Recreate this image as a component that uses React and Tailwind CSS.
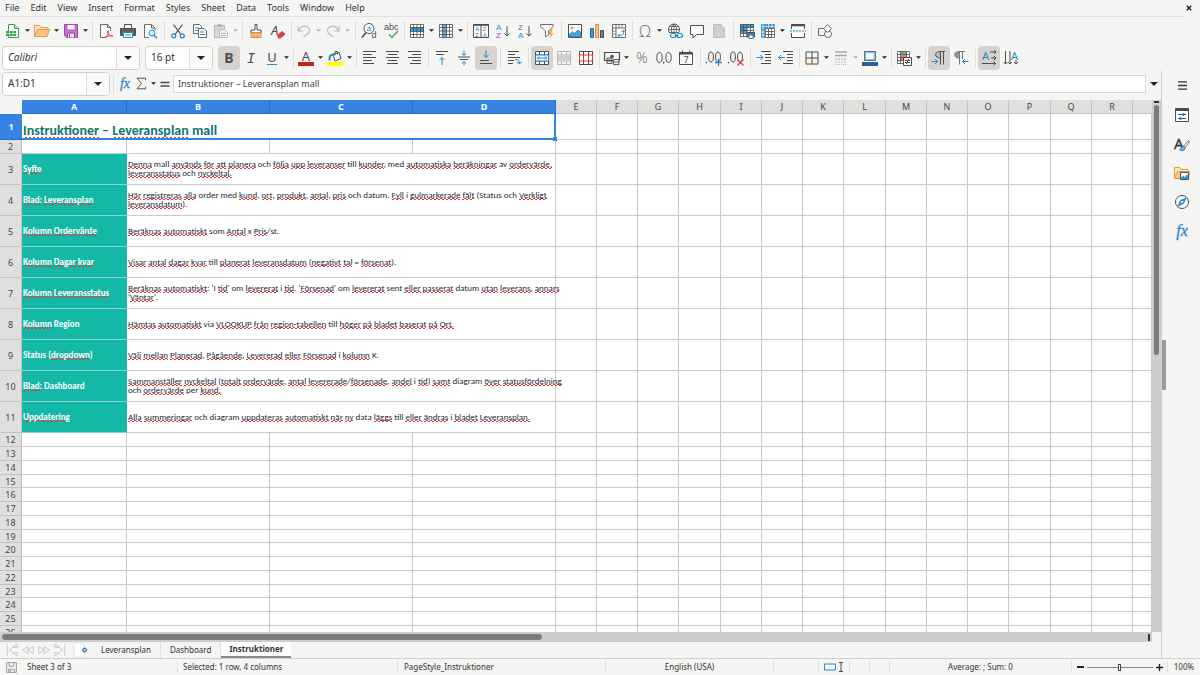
import { Fragment } from "react";

const dark = "#4d4d4d";
const blue = "#1e8bcd";
const red = "#d83b3b";
const purple = "#a33fb5";

const sans = "Liberation Sans, sans-serif";
const noto = "Noto Sans, sans-serif";

const lines = (rows, stroke = dark) =>
  rows.map(([x1, x2, y]) => <path key={y} d={`M${x1} ${y}H${x2}`} stroke={stroke} />);

// All drawings share a 16x16 view box.
const icons = {
  newDoc: (
    <>
      <path d="M3.5 1.5h6l4 4v9h-10z" fill="#fff" stroke="#3a9a54" />
      <path d="M9.5 1.5v4h4" fill="#bfe5c8" stroke="#3a9a54" />
      <path d="M1 8h10v5H1z" fill="#3aa556" />
      <path d="M1 10.5h10M4.5 8v5M8 8v5" stroke="#d8f3de" strokeWidth=".7" />
    </>
  ),
  folder: (
    <>
      <path d="M.5 13.5v-11h5l1.500 2h7v2" fill="#fbe3b9" stroke="#e39b45" />
      <path d="M.5 13.500l3-7h12l-2.500 7z" fill="#f9c67c" stroke="#e39b45" />
    </>
  ),
  save: (
    <>
      <path d="M1.500 1.500h13v13h-11l-2-2z" fill="#c77bd0" stroke="#9a3fa8" />
      <path d="M4 1.500h8v5.500H4z" fill="#fff" stroke="#9a3fa8" strokeWidth=".8" />
      <path d="M4.500 14.500V10h7v4.500" fill="#f2def5" stroke="#9a3fa8" />
      <path d="M6.500 11v3.500" stroke="#9a3fa8" />
    </>
  ),
  pdf: (
    <>
      <path d="M8 14.500H2.500v-13h7l3 3V8" fill="#fff" stroke="#6b6b6b" />
      <path d="M9.500 1.500v3h3" stroke="#6b6b6b" />
      <path d="M7 14.500c3-2 4-5 3.300-6.500-.8-1-1.500.6-.3 2.500 1.200 2 3.500 3 4.700 2.600 1-.8-1.700-1.300-7.700 1.400z" stroke="#dd3a4a" strokeWidth="1" />
    </>
  ),
  print: (
    <>
      <path d="M4.500 5.500v-4h7v4" fill="#fff" stroke={dark} />
      <path d="M.500 5.500h15v7H.500z" fill="#5d6266" stroke="#4a4e51" />
      <path d="M3.500 9.500h9v5h-9z" fill="#fff" stroke={blue} />
      <path d="M5 12h6" stroke={blue} />
    </>
  ),
  preview: (
    <>
      <path d="M7 14.500H2.500v-13h7l3.500 3.500V7" fill="#fff" stroke="#6b6b6b" />
      <path d="M9.500 1.500V5H13" stroke="#6b6b6b" />
      <circle cx="10" cy="10" r="3" fill="#d8ecf8" stroke={blue} />
      <path d="M12 12.200l3 3" stroke={blue} strokeWidth="1.400" />
    </>
  ),
  cut: (
    <>
      <path d="M3.500 1.500l7.500 10M12.500 1.500l-7.500 10" stroke={dark} strokeWidth="1.200" />
      <circle cx="3.700" cy="12.800" r="2" stroke={blue} strokeWidth="1.200" />
      <circle cx="12.300" cy="12.800" r="2" stroke={blue} strokeWidth="1.200" />
    </>
  ),
  copy: (
    <>
      <path d="M1.500 1.500h6l2 2v7h-8z" fill="#fff" stroke="#6b6b6b" />
      <path d="M3 5h4M3 7.500h4" stroke={blue} />
      <path d="M6.500 5.500h5.500l2.500 2.500v6.500h-8z" fill="#fff" stroke="#6b6b6b" />
      <path d="M8 9h4M8 11.500h5" stroke={blue} />
    </>
  ),
  paste: (
    <>
      <path d="M1.500 2.500h10v12h-10z" fill="#d9d8d7" stroke="#b9b8b6" />
      <path d="M4.500 1h4v3h-4z" fill="#b9b8b6" />
      <path d="M6.500 6.500h5l3 3v5h-8z" fill="#f2f1f0" stroke="#b9b8b6" />
      <path d="M8 10.500h5M8 12.500h5" stroke="#b9b8b6" />
    </>
  ),
  brush: (
    <>
      <path d="M7 1.500h2v5.500h4v3H3V7h4z" fill="#fff" stroke={dark} />
      <path d="M3 10h10v4.500H3z" fill="#f9c67c" stroke="#e08a35" />
      <path d="M6 11.500v3M9.500 11.500v3" stroke="#e08a35" />
    </>
  ),
  clear: (
    <>
      <text x="1" y="12" fontSize="13" fill={dark} fontFamily={noto} fontStyle="italic">A</text>
      <path d="M7.500 12.500l4.500-4 3 2.500-4.500 4h-2z" fill="#e0414b" stroke="#c4303a" strokeWidth=".8" />
    </>
  ),
  undo: <path d="M2 3v5h5M2.500 7.500c2-4.500 6-5.300 9-3.500 3 2 2.500 5 0 7l-4 3" stroke="#bdbcba" strokeWidth="1.200" />,
  redo: <path d="M14 3v5H9M13.500 7.500c-2-4.500-6-5.300-9-3.500-3 2-2.500 5 0 7l4 3" stroke="#bdbcba" strokeWidth="1.200" />,
  find: (
    <>
      <path d="M5 9.500L1 14.500" stroke={dark} strokeWidth="1.600" />
      <circle cx="8" cy="5.500" r="5" stroke={dark} fill="#fff" />
      <text x="5.500" y="8" fontSize="8" fill={blue} fontFamily={sans}>a</text>
      <text x="10.500" y="15" fontSize="9" fill={dark} fontFamily={sans}>d</text>
    </>
  ),
  spelling: (
    <>
      <text x="1" y="7" fontSize="9" fill={dark} fontFamily={sans}>abc</text>
      <path d="M6 11.500l3 3 6-6.500" stroke="#35b06c" strokeWidth="1.500" />
    </>
  ),
  rows: (
    <>
      <path d="M1 1h14v14H1z" fill="#fff" />
      <path d="M1 4h14v4.500H1z" fill="#2f97dc" />
      <path d="M1.500 1.500h13v13h-13zM1.500 4.500h13M1.500 8.500h13M1.500 11.500h13M4.500 1.500v13M8 1.500v13M11.500 1.500v13" stroke={dark} strokeWidth=".8" />
    </>
  ),
  cols: (
    <>
      <path d="M1 1h14v14H1z" fill="#fff" />
      <path d="M4.500 1h4v14h-4z" fill="#5ab0e6" />
      <path d="M1.500 1.500h13v13h-13zM1.500 4.500h13M1.500 8h13M1.500 11.500h13M4.500 1.500v13M8.500 1.500v13M11.500 1.500v13" stroke={dark} strokeWidth=".8" />
    </>
  ),
  sort: (
    <>
      <path d="M.5 1.500h15v13H.5zM8 1.500v13" fill="#fff" stroke={dark} />
      <path d="M.5 2h15" stroke={dark} strokeWidth="1.600" />
      <g fontSize="6" fontFamily={sans}>
        <text x="2.300" y="8" fill={blue}>A</text>
        <text x="2.300" y="14" fill={purple}>Z</text>
        <text x="9.800" y="8" fill={purple}>Z</text>
        <text x="9.800" y="14" fill={blue}>A</text>
      </g>
    </>
  ),
  sortAsc: (
    <>
      <text x="1" y="6.500" fontSize="8" fill={blue} fontFamily={sans}>A</text>
      <text x="1" y="15" fontSize="8" fill={purple} fontFamily={sans}>Z</text>
      <path d="M12 3v10M9.500 10.500L12 13l2.500-2.500" stroke={dark} />
    </>
  ),
  sortDesc: (
    <>
      <text x="1" y="6.500" fontSize="8" fill={purple} fontFamily={sans}>Z</text>
      <text x="1" y="15" fontSize="8" fill={blue} fontFamily={sans}>A</text>
      <path d="M12 3v10M9.500 10.500L12 13l2.500-2.500" stroke={dark} />
    </>
  ),
  filter: (
    <>
      <path d="M1.500 1.500h12.500v2L9.500 8v4l-3 2V8l-5-4.500z" fill="#fff" stroke="#6b6b6b" />
      <path d="M12 6l-3 5h2.500l-1 4.500 4-5.500H12l2-4z" fill="#f6a03a" />
    </>
  ),
  image: (
    <>
      <path d="M1.500 1.500h13v13h-13z" fill="#fff" stroke={dark} />
      <circle cx="5" cy="5" r="1.600" fill="#f3a64c" />
      <path d="M2 14v-2l3.500-3 2 1.500L11 7l3 3v4z" fill="#4aa3de" stroke="#1d70ae" strokeWidth=".8" />
    </>
  ),
  chart: (
    <>
      <path d="M1.500 5.500h3v9h-3z" fill="#3d97d8" stroke="#1d70ae" />
      <path d="M6.500 1.500h3v13h-3z" fill="#f9c67c" stroke="#e08a35" />
      <path d="M11.500 7.500h3v7h-3z" fill="#7a7a7a" stroke={dark} />
    </>
  ),
  pivot: (
    <>
      <path d="M1.500 1.500h13v13h-13zM1.500 5h13M5 1.500v13" fill="#fff" stroke="#6b6b6b" />
      <path d="M8 1.500V5M11 1.500V5M1.500 8H5M1.500 11H5" stroke="#6b6b6b" strokeWidth=".8" />
      <path d="M7.500 12.500h2c2 0 3-1 3-3v-2M9 10.500l-2 2 2 2M10.500 9l2-2 2 2" stroke={blue} />
    </>
  ),
  omega: <text x="8" y="13.500" fontSize="16" textAnchor="middle" fill="#6b6b6b" fontFamily="Open Sans, sans-serif" fontWeight="300">Ω</text>,
  globe: (
    <>
      <circle cx="7" cy="6.500" r="5.500" fill="#fff" stroke={dark} />
      <path d="M1.500 6.500h11M2.500 3.500h9M2.500 9.500h9M7 1v11M7 1C3.500 4 3.500 9 7 12M7 1c3.500 3 3.500 8 0 11" stroke={dark} strokeWidth=".8" />
      <path d="M3 10h13v5H3z" fill="#f5f5f4" />
      <rect x="3.500" y="10.500" width="5.500" height="4" rx="2" stroke={blue} strokeWidth="1.200" />
      <rect x="10" y="10.500" width="5.500" height="4" rx="2" stroke={blue} strokeWidth="1.200" />
      <path d="M7.500 12.500h4" stroke={blue} />
    </>
  ),
  comment: <path d="M1.500 2.500h13v9H7.500l-3.500 3.500v-3.500H1.500z" fill="#fff" stroke={dark} />,
  headerFooter: (
    <>
      <path d="M2.500 1.500h7.500l3.500 3.500v9.500h-11z" fill="#d0cfcd" stroke="#bfbebc" />
      <path d="M10 1.500V5h3.500" fill="#e8e7e6" stroke="#bfbebc" />
    </>
  ),
  printRange: (
    <>
      <path d="M1 1h14v13H1z" fill="#fff" />
      <path d="M1 1h14v3.500H1zM1 4h7v6H1z" fill="#3d97d8" />
      <path d="M1.500 1.500h13v12h-13zM1.500 4.500h13M1.500 7.500h13M1.500 10.500h13M4.500 1.500v12M8 1.500v12M11.500 1.500v12" stroke={dark} strokeWidth=".8" />
      <path d="M8 9.500h7.500V14H8z" fill="#6d7275" stroke={dark} />
      <path d="M10 12h4v3.500h-4z" fill="#fff" stroke={blue} />
    </>
  ),
  freeze: (
    <>
      <path d="M2 2h13v13H2z" fill="#fff" />
      <path d="M1 1h14v4H1zM1 5h4v10H1z" fill="#3d97d8" />
      <path d="M5.500 5.500h9v9h-9zM5.500 8.500h9M5.500 11.500h9M8.500 5.500v9M11.500 5.500v9" stroke={dark} strokeWidth=".8" />
      <path d="M1 3.500h14M3 1v14M8.500 1v4M12 1v4M1 9h4M1 12h4" stroke="#cfe8f7" strokeWidth=".8" />
    </>
  ),
  split: (
    <>
      <path d="M1.500 6V1.500h13V6M1.500 10v4.500h13V10" fill="#fff" stroke={dark} />
      <path d="M1 2.500h14" stroke={dark} strokeWidth="1.600" />
      <path d="M0 8h16" stroke={blue} strokeDasharray="2 1" />
    </>
  ),
  shapes: (
    <>
      <path d="M1.500 5.500h7v7h-7z" stroke="#6b6b6b" />
      <circle cx="11" cy="11" r="3.500" fill="#f5f5f4" stroke="#6b6b6b" />
      <path d="M10.500 1.500l4 4-4 4-4-4z" fill="#f5f5f4" stroke="#6b6b6b" />
    </>
  ),
  bold: <text x="8" y="13" fontSize="14" fontWeight="700" textAnchor="middle" fill={dark} fontFamily={noto}>B</text>,
  italic: <text x="8" y="13" fontSize="14" fontStyle="italic" textAnchor="middle" fill={dark} fontFamily="Liberation Mono, monospace">I</text>,
  underline: (
    <>
      <text x="8" y="12" fontSize="13" textAnchor="middle" fill={dark} fontFamily={noto}>U</text>
      <path d="M3 14.500h10" stroke={blue} />
    </>
  ),
  fontColor: (
    <>
      <text x="8" y="10.500" fontSize="13" textAnchor="middle" fill={dark} fontFamily={noto}>A</text>
      <path d="M0 12h16v4H0z" fill="#c9211e" />
    </>
  ),
  fillColor: (
    <>
      <path d="M6 4.500l6-2 2 6-6 2.500z" fill="#fff" stroke={dark} />
      <path d="M8 5.500V1.500h2.500v3" stroke={dark} />
      <path d="M7 4.500c-3 0-5 1-4.500 6" stroke={blue} strokeWidth="2" />
      <path d="M0 12h16v4H0z" fill="#ffff00" />
    </>
  ),
  alignLeft: lines([[1, 14, 1.5], [1, 10, 4.5], [1, 14, 7.5], [1, 10, 10.5], [1, 12, 13.5]]),
  alignCenter: lines([[2, 15, 1.5], [4, 13, 4.5], [2, 15, 7.5], [4, 13, 10.5], [3, 14, 13.5]]),
  alignRight: lines([[2, 15, 1.5], [6, 15, 4.5], [2, 15, 7.5], [6, 15, 10.5], [4, 15, 13.5]]),
  alignTop: (
    <>
      {lines([[2, 14, 1.5], [2, 10, 4.5]])}
      <path d="M8 15V7.500M5.500 10L8 7.500l2.500 2.500" stroke={blue} />
    </>
  ),
  alignMiddle: (
    <>
      {lines([[2, 14, 7], [4, 12, 9.5]])}
      <path d="M8 .5v5M6 3.500l2 2 2-2M8 15.500v-4M6 13.500l2-2 2 2" stroke={blue} />
    </>
  ),
  alignBottom: (
    <>
      {lines([[2, 11, 10.5], [2, 14, 13.5]])}
      <path d="M8 .5v7M5.500 5L8 7.500 10.500 5" stroke={blue} />
    </>
  ),
  wrap: (
    <>
      {lines([[2, 13, 1.5], [2, 9, 4.5], [2, 14, 7.5], [2, 8, 10.5], [2, 7, 13.5]])}
      <path d="M9 9.500c3-.5 4.500 1 4.500 4M11 12l2.500 2L15.500 11.500" stroke={blue} />
    </>
  ),
  merge: (
    <>
      <path d="M1.500 1.500h13v13h-13zM1.500 5h13M1.500 11h13M5.500 1.500V5M10.500 1.500V5M5.500 11v3.500M10.500 11v3.500" fill="#fff" stroke={dark} />
      <path d="M1.500 5h13v6h-13z" fill="#fff" stroke={blue} />
      <path d="M3 8h10M5 6.500L3.500 8 5 9.500M11 6.500L12.500 8 11 9.500" stroke={blue} />
    </>
  ),
  mergeCells: (
    <>
      <path d="M1.500 1.500h13v13h-13zM1.500 5h13M1.500 11h13M5.500 1.500V5M10.500 1.500V5M5.500 11v3.500M10.500 11v3.500" stroke="#b9b8b6" />
      <path d="M2 5.500h12v5H2z" fill="#d0cfcd" />
    </>
  ),
  unmerge: (
    <>
      <path d="M1.500 1.500h13v13h-13zM5.500 1.500V5M10.500 1.500V5M5.500 11v3.500M10.500 11v3.500" fill="#fff" stroke={dark} />
      <path d="M1.500 5h13v6h-13zM5.500 5v6M10.500 5v6" stroke={red} />
    </>
  ),
  currency: (
    <>
      <path d="M.5 2.500h15v8H.5z" stroke={dark} strokeWidth="1.200" />
      <circle cx="8" cy="6.500" r="1.800" fill={dark} />
      <path d="M3 8h5v2H3zM3 11h5v2.500H3zM9.500 9.500H15v5H9.500z" fill="#f5f5f4" stroke={dark} strokeWidth=".9" />
      <path d="M9.500 12H15" stroke={dark} strokeWidth=".9" />
    </>
  ),
  percent: <text x="8" y="13" fontSize="14" textAnchor="middle" fill="#5c5c5c" fontFamily="Open Sans, sans-serif" fontWeight="300">%</text>,
  number: (
    <>
      <ellipse cx="3.500" cy="7.500" rx="2.700" ry="5" stroke={dark} />
      <ellipse cx="12.500" cy="7.500" rx="2.700" ry="5" stroke={dark} />
      <path d="M7.200 13.500l.9-1.800" stroke={dark} strokeWidth="1.300" />
    </>
  ),
  date: (
    <>
      <path d="M1.500 2.500h13v12h-13z" fill="#fff" stroke={dark} />
      <path d="M1.500 3.500h13" stroke={dark} strokeWidth="2" />
      <path d="M4.500.5v3M11.500.5v3" stroke={dark} />
      <text x="8" y="13" fontSize="9" textAnchor="middle" fill={dark} fontFamily={noto}>7</text>
    </>
  ),
  addDecimal: (
    <>
      <path d="M.5 11.800v1.500" stroke={dark} strokeWidth="1.300" />
      <ellipse cx="5" cy="7" rx="2.400" ry="5" stroke={dark} />
      <ellipse cx="12" cy="7" rx="2.400" ry="5" stroke={dark} />
      <path d="M9 12.500h7M12.500 9v7" stroke={blue} strokeWidth="1.300" />
    </>
  ),
  removeDecimal: (
    <>
      <path d="M.5 11.800v1.500" stroke={dark} strokeWidth="1.300" />
      <ellipse cx="5" cy="7" rx="2.400" ry="5" stroke={dark} />
      <ellipse cx="12" cy="7" rx="2.400" ry="5" stroke={dark} />
      <path d="M9.500 9.500l6 6M15.500 9.500l-6 6" stroke={red} strokeWidth="1.200" />
    </>
  ),
  indent: (
    <>
      {lines([[5, 15, 1.5], [9, 15, 4.5], [9, 15, 7.5], [9, 15, 10.5], [5, 15, 13.5]])}
      <path d="M.5 7.500H7M4.500 5L7 7.500 4.500 10" stroke={blue} />
    </>
  ),
  outdent: (
    <>
      {lines([[5, 15, 1.5], [9, 15, 4.5], [9, 15, 7.5], [9, 15, 10.5], [5, 15, 13.5]])}
      <path d="M.5 7.500H7M3 5L.500 7.500 3 10" stroke={blue} />
    </>
  ),
  borders: (
    <>
      <path d="M2 2h12v12H2zM8 2v12M2 8h12" stroke={dark} />
      <path d="M2 14h12" stroke="#f08a2c" />
    </>
  ),
  borderStyle: (
    <>
      <path d="M2 2h12M2 5.500h12" stroke="#a9a8a6" strokeWidth="1.500" />
      <path d="M2 9h12" stroke="#a9a8a6" strokeDasharray="2 1" />
      <path d="M2 12h12M2 14.500h12" stroke="#b9b8b6" strokeDasharray="1 1" />
    </>
  ),
  borderColor: (
    <>
      <path d="M2.500 1.500h11v9h-11z" stroke={dark} fill="#fff" />
      <path d="M3.500 2.500h9v7h-9z" stroke="#8cc4ea" strokeWidth="1.600" />
      <path d="M0 12h16v4H0z" fill="#2a6099" />
    </>
  ),
  conditional: (
    <>
      <path d="M1 1h13v13H1z" fill="#fff" />
      <path d="M4.500 1.500h6V4h-6z" fill="#5dbb63" />
      <path d="M4.500 4.500h6v6h-6z" fill="#f27a7a" />
      <path d="M1.500 1.500h12v12h-12zM1.500 4.500h12M1.500 7.500h12M1.500 10.500h12M4.500 1.500v12M10.500 1.500v12" stroke={dark} strokeWidth=".8" />
      <path d="M7.500 7.500h8v8h-8z" fill="#fff" stroke={dark} />
      <path d="M9 10.500h5M9 12.500h5M12.800 9l-2.600 5" stroke={dark} />
    </>
  ),
  leftToRight: (
    <>
      <path d="M8 1.500h6M9.500 1.500v13M12.500 1.500v13" stroke={dark} />
      <path d="M9.500 1.500C3 1.500 3 8 9.500 8z" fill="#bbb" stroke={dark} />
      <path d="M.5 11.500h6M4 9l2.500 2.500L4 14" stroke={blue} />
    </>
  ),
  rightToLeft: (
    <>
      <path d="M6 1.500h6M6.500 1.500v13M9.500 1.500V9" stroke="#777" />
      <path d="M6.500 1.500C0 1.500 0 8 6.500 8z" fill="#999" stroke="#777" />
      <path d="M15.500 11.500H9.500M12 9l-2.500 2.500L12 14" stroke={blue} />
    </>
  ),
  textHorizontal: (
    <>
      <text x="1" y="9.500" fontSize="11" fill={blue} fontFamily={noto}>A</text>
      <path d="M9 2h6M13 .5L15 2l-2 1.500M10 8h5M13 6l2 2-2 2M1 13.500h13.500M12.500 11.500l2 2-2 2" stroke={dark} />
    </>
  ),
  textVertical: (
    <>
      <text x="8" y="9.500" fontSize="11" fill={blue} fontFamily={noto}>A</text>
      <path d="M2.500 1v13M.5 12l2 2 2-2M7 1v13M5 12l2 2 2-2M13 10v4M11 12l2 2 2-2" stroke={dark} />
    </>
  ),
  fx: (
    <text x="8" y="12.500" fontSize="16" fontStyle="italic" textAnchor="middle" fill="#2a87c8" stroke="#2a87c8" strokeWidth=".3" fontFamily="Liberation Serif, serif">
      fx
    </text>
  ),
  sigma: <path d="M13 4V1.500H2.500L8 8l-5.500 6.500H13V12" stroke={dark} strokeWidth="1.200" />,
  equals: <path d="M2 6h12M2 10.500h12" stroke={dark} strokeWidth="2" />,
  hamburger: <path d="M2.500 3.500h11M2.500 8h11M2.500 12.500h11" stroke="#333" strokeWidth="1.600" />,
  properties: (
    <>
      <path d="M1.500 1.500h13v13h-13z" fill="#fff" stroke={dark} />
      <path d="M1.500 3h13" stroke={dark} strokeWidth="2" />
      <path d="M4 7.500h8M4 11.500h8" stroke={dark} />
      <path d="M9.500 6v3M6.500 10v3" stroke={blue} strokeWidth="1.800" />
    </>
  ),
  styles: (
    <>
      <text x="0" y="12.500" fontSize="15" fill="#333" stroke="#333" strokeWidth=".3" fontFamily={noto}>A</text>
      <path d="M14.500 4.500L9.500 10l1.500 1.500 4.500-5.500z" fill="#fff" stroke={dark} strokeWidth=".8" />
      <path d="M9.500 10c-2 0-2 3-4 4 3 1.500 6 .5 5.500-2.500z" fill="#5ab0e6" stroke={blue} />
    </>
  ),
  gallery: (
    <>
      <path d="M.5 13.500v-11h5l1.500 2h7v3" fill="#fbe3b9" stroke="#e39b45" />
      <path d="M.5 13.500l3-7h12l-1 7z" fill="#f9c67c" stroke="#e39b45" />
      <path d="M6.500 7.500h8v7h-8z" fill="#fff" stroke={dark} />
      <path d="M7 14v-1.500l2.500-2L11 12l2-2.500 1 1V14z" fill="#3d97d8" />
    </>
  ),
  navigator: (
    <>
      <circle cx="8" cy="8" r="6.500" fill="#fff" stroke={dark} />
      <path d="M12 4l-2.500 5.500L4 12l2.500-5.500z" fill="#3d97d8" stroke={blue} />
      <circle cx="8" cy="8" r="1" fill="#fff" />
    </>
  ),
  diskSmall: (
    <>
      <path d="M2 2h12v12H2z" stroke="#8a8a8a" />
      <path d="M5 2v4.500h6V2M4.500 14v-4h7v4M6.500 10v4" stroke="#8a8a8a" />
    </>
  ),
  addSheet: (
    <>
      <path d="M0 0h9l3 3v13H0z" fill="#fff" stroke="#d5d4d2" strokeWidth=".6" />
      <circle cx="12" cy="8" r="2" stroke="#2a6cb8" strokeWidth="1.200" />
      <path d="M12 5v2M12 9v2M9 8h2M13 8h2" stroke="#2a6cb8" />
    </>
  ),
  first: <path d="M2.500 1v14M14 1L5 8l9 7v-4H9M14 1v4H9" stroke="#c6c5c3" />,
  prev: <path d="M8 4L2 8l6 4zM14 4L8 8l6 4z" stroke="#c6c5c3" />,
  next: <path d="M2 4l6 4-6 4zM8 4l6 4-6 4z" stroke="#c6c5c3" />,
  last: <path d="M13.500 1v14M2 1l9 7-9 7v-4h5M2 1v4h5" stroke="#c6c5c3" />,
};

function Icon({ name, className = "h-4 w-4" }) {
  return (
    <svg viewBox="0 0 16 16" fill="none" className={`${className} shrink-0 overflow-visible`} aria-hidden="true">
      {icons[name]}
    </svg>
  );
}

function Caret({ muted, large }) {
  return (
    <svg viewBox="0 0 8 4" className={large ? "h-1 w-2" : "h-[3px] w-[5px]"} aria-hidden="true">
      <path d="M0 0h8L4 4z" fill={muted ? "#b5b4b2" : "#222"} />
    </svg>
  );
}

// "|" is a separator between plain groups, "'" one next to a split button.
const standardBar = [
  "newDoc+", "folder+", "save+", "'", "pdf", "print", "preview", "|", "cut", "copy", "paste-", "'",
  "brush", "clear", "'", "undo-", "redo-", "|", "find", "spelling", "'", "rows+", "cols+", "'",
  "sort", "sortAsc", "sortDesc", "filter", "|", "image", "chart", "pivot", "'", "omega+",
  "globe", "comment", "headerFooter", "|", "printRange", "freeze+", "split", "'", "shapes",
];

const formattingBar = [
  "bold*", "italic", "underline+", "'", "fontColor+", "fillColor+", "'",
  "alignLeft", "alignCenter", "alignRight", "|", "alignTop", "alignMiddle", "alignBottom*", "|",
  "wrap", "|", "merge*", "mergeCells", "unmerge", "'", "currency+", "percent", "number", "date", "|",
  "addDecimal", "removeDecimal", "|", "indent", "outdent", "'", "borders+", "borderStyle-", "borderColor+", "'",
  "conditional+", "'", "leftToRight*", "rightToLeft", "|", "textHorizontal*", "textVertical",
];

function ToolItem({ item }) {
  if (item === "|" || item === "'") {
    return (
      <div className={`flex shrink-0 justify-center ${item === "|" ? "w-[6px]" : "w-[5px]"}`}>
        <div className="h-5 w-px bg-[#e0dfdd]" />
      </div>
    );
  }

  const name = item.replace(/[+*-]$/, "");
  const flag = item.slice(name.length);

  if (flag === "+" || flag === "-") {
    return (
      <div className="flex shrink-0 items-center">
        <button aria-label={name} className="flex h-6 w-5 items-center justify-center">
          <Icon name={name} />
        </button>
        <button aria-label={`${name} options`} className="flex h-6 w-[9px] items-center justify-center">
          <Caret muted={flag === "-"} />
        </button>
      </div>
    );
  }

  return (
    <button
      aria-label={name}
      className={`flex h-6 w-[22px] shrink-0 items-center justify-center rounded-sm ${flag === "*" ? "bg-[#d5d2cf]" : ""}`}
    >
      <Icon name={name} />
    </button>
  );
}

function Combo({ label, value, className, inputClass = "" }) {
  return (
    <div className={`flex h-6 shrink-0 overflow-hidden rounded border border-[#d2cfcc] bg-white ${className}`}>
      <input aria-label={label} defaultValue={value} className={`min-w-0 flex-1 px-[5px] text-[10px] outline-none ${inputClass}`} />
      <button aria-label={`${label} list`} className="flex w-[23px] items-center justify-center border-l border-[#e0dfdd] bg-[#fafaf9]">
        <Caret large />
      </button>
    </div>
  );
}

const menus = ["File", "Edit", "View", "Insert", "Format", "Styles", "Sheet", "Data", "Tools", "Window", "Help"];

// Words between underscores are flagged by the spell checker.
const instructions = [
  ["_Syfte_", "_Denna_ mall _används_ _för_ _att_ _planera_ och _följa_ _upp_ _leveranser_ till _kunder_, med _automatiska_ _beräkningar_ av _ordervärde,_", "_leveransstatus_ och _nyckeltal._"],
  ["_Blad_: _Leveransplan_", "_Här_ _registreras_ _alla_ order med _kund_, _ort_, _produkt_, _antal_, _pris_ och datum. _Fyll_ i _gulmarkerade_ _fält_ (Status och _Verkligt_", "_leveransdatum_)."],
  ["_Kolumn_ _Ordervärde_", "_Beräknas_ _automatiskt_ som _Antal_ x _Pris_/st."],
  ["_Kolumn_ _Dagar_ _kvar_", "_Visar_ _antal_ _dagar_ _kvar_ till _planerat_ _leveransdatum_ (_negativt_ _tal_ = _försenat_)."],
  ["_Kolumn_ _Leveransstatus_", "_Beräknas_ _automatiskt_: 'I _tid_' om _levererat_ i _tid_. '_Försenad_' om _levererat_ sent _eller_ _passerat_ datum _utan_ _leverans_, _annars_", "'_Väntar_'."],
  ["_Kolumn_ Region", "_Hämtas_ _automatiskt_ via _VLOOKUP_ _från_ _region-tabellen_ till _höger_ _på_ _bladet_ _baserat_ _på_ _Ort._"],
  ["Status (_dropdown_)", "_Välj_ _mellan_ _Planerad_, _Pågående_, _Levererad_ _eller_ _Försenad_ i _kolumn_ K."],
  ["_Blad_: Dashboard", "_Sammanställer_ _nyckeltal_ (_totalt_ _ordervärde_, _antal_ _levererade_/_försenade_, _andel_ i _tid_) _samt_ diagram _över_ _statusfördelning_", "och _ordervärde_ per _kund._"],
  ["_Uppdatering_", "_Alla_ _summeringar_ och diagram _uppdateras_ _automatiskt_ _när_ _ny_ data _läggs_ till _eller_ _ändras_ i _bladet_ _Leveransplan._"],
];

// Small two-row red zigzag under each flagged word.
const squiggle =
  "bg-[image:linear-gradient(90deg,#e03c3c_50%,transparent_50%),linear-gradient(90deg,#e03c3c_50%,transparent_50%)] bg-[length:4px_1px] bg-[position:0_100%,2px_calc(100%-1px)] bg-repeat-x";

function Checked({ text }) {
  return text.split("_").map((part, i) =>
    i % 2 ? (
      <span key={i} className={squiggle}>
        {part}
      </span>
    ) : (
      <Fragment key={i}>{part}</Fragment>
    )
  );
}

const letters = "ABCDEFGHIJKLMNOPQR".split("");
const narrow = letters.slice(4);

const cell = "border-r border-b border-[#c9c9c9] p-0";
const rowHead = "border-r border-b border-[#c4c3c1] bg-[#e0dfdd] p-0 font-normal text-[#444]";
const bodyText = "pb-[2px] pl-px align-middle font-[Carlito,Lato,sans-serif] text-[9px] leading-[9px] whitespace-nowrap";

function BlankCells({ count }) {
  return Array.from({ length: count }, (_, i) => <td key={i} className={cell} />);
}

function Sheet() {
  return (
    <table className="w-full table-fixed border-separate border-spacing-0 text-[9px] leading-none">
      <colgroup>
        <col className="w-[22px]" />
        <col className="w-[105px]" />
        <col className="w-[143px]" />
        <col className="w-[143px]" />
        <col className="w-[143px]" />
        {narrow.map((l, i) => (
          <col key={l} className={i % 4 === 3 ? "w-[42px]" : "w-[41px]"} />
        ))}
        <col />
      </colgroup>
      <thead>
        <tr className="h-[14px]">
          <th className="bg-[#f5f5f4] p-0" />
          {letters.map((l, i) => (
            <th
              key={l}
              className={`border-r border-b p-0 ${i < 4 ? "border-[#2a6fc4] bg-[#3584e4] font-bold text-white" : "border-[#c4c3c1] bg-[#e0dfdd] font-normal text-[#444]"}`}
            >
              {l}
            </th>
          ))}
          <th className="border-b border-[#c4c3c1] bg-[#e0dfdd] p-0" />
        </tr>
      </thead>
      <tbody>
        <tr className="h-[26px]">
          <th className="border-b border-[#2a6fc4] bg-[#3584e4] p-0 font-bold text-white">1</th>
          <td colSpan={4} className="relative p-0 align-bottom">
            <div className="px-px pb-[2px] font-[Carlito,Lato,sans-serif] text-[14px] font-bold leading-none text-[#0f766e]">
              <Checked text="_Instruktioner_ – _Leveransplan_ mall" />
            </div>
            <div className="absolute inset-0 border-r-2 border-b-2 border-[#3584e4]" />
            <div className="absolute -right-px -bottom-px h-1 w-1 bg-[#3584e4]" />
          </td>
          <BlankCells count={15} />
        </tr>
        <tr className="h-[14px]">
          <th className={rowHead}>2</th>
          <BlankCells count={19} />
        </tr>
        {instructions.map(([title, ...body], i) => (
          <tr key={title} className="h-[31px]">
            <th className={rowHead}>{i + 3}</th>
            <td className={`${bodyText} border-b border-[#8fd0c8] bg-[#14b8a6] font-bold text-white`}>
              <Checked text={title} />
            </td>
            <td colSpan={3} className={`${bodyText} border-r border-b border-[#c9c9c9] text-[#1f2937]`}>
              {body.map((line) => (
                <div key={line}>
                  <Checked text={line} />
                </div>
              ))}
            </td>
            <BlankCells count={15} />
          </tr>
        ))}
        {Array.from({ length: 15 }, (_, i) => (
          <tr key={i} className={i % 4 === 3 ? "h-[13px]" : "h-[14px]"}>
            <th className={rowHead}>{i + 12}</th>
            <BlankCells count={19} />
          </tr>
        ))}
      </tbody>
    </table>
  );
}

function FormulaBar() {
  return (
    <div className="flex h-[29px] shrink-0 items-center pb-1">
      <Combo label="Name Box" value="A1:D1" className="ml-[2px] w-[108px]" />
      <div className="mx-[3px] h-5 w-px bg-[#e0dfdd]" />
      <button aria-label="Function Wizard" className="flex w-4 justify-center">
        <Icon name="fx" className="h-[14px] w-[14px]" />
      </button>
      <button aria-label="Select Function" className="flex w-4 justify-center">
        <Icon name="sigma" className="h-[13px] w-[13px]" />
      </button>
      <button aria-label="Function list" className="flex w-2 justify-center">
        <Caret />
      </button>
      <button aria-label="Formula" className="mx-[3px] flex w-[10px] justify-center">
        <Icon name="equals" className="h-3 w-3" />
      </button>
      <input
        aria-label="Input line"
        defaultValue="Instruktioner – Leveransplan mall"
        className="h-[18px] min-w-0 flex-1 border border-[#d8d7d5] bg-white px-1 text-[9px] text-[#444] outline-none"
      />
      <button aria-label="Expand formula bar" className="flex w-[15px] justify-center">
        <Caret large />
      </button>
    </div>
  );
}

const tabs = ["Leveransplan", "Dashboard", "Instruktioner"];

function SheetTabs() {
  return (
    <nav className="flex h-4 shrink-0 items-stretch text-[8px] text-[#333]">
      <div className="flex w-[70px] items-center pl-1">
        {["first", "prev", "next", "last"].map((n) => (
          <button key={n} aria-label={`${n} sheet`}>
            <Icon name={n} className="h-[14px] w-[16px]" />
          </button>
        ))}
      </div>
      <button aria-label="Add sheet" className="flex w-[22px] items-center justify-center">
        <Icon name="addSheet" className="h-[14px] w-[14px]" />
      </button>
      {tabs.map((t) => (
        <button
          key={t}
          className={t === "Instruktioner" ? "border-b-2 border-[#8a8988] bg-white px-2 font-bold" : "border-r border-[#e0dfdd] px-[9px]"}
        >
          {t}
        </button>
      ))}
    </nav>
  );
}

function StatusBar() {
  const part = "flex items-center border-r border-[#e0dfdd] h-3";
  return (
    <footer className="flex h-[17px] shrink-0 items-center border-t border-[#d0cfcd] text-[8px] text-[#333]">
      <div className="flex w-[22px] items-center justify-center">
        <Icon name="diskSmall" className="h-[13px] w-[13px]" />
      </div>
      <div className={`${part} w-[156px] pl-[5px]`}>Sheet 3 of 3</div>
      <div className={`${part} w-[220px] pl-[5px]`}>Selected: 1 row, 4 columns</div>
      <div className={`${part} flex-1 pl-[6px]`}>PageStyle_Instruktioner</div>
      <div className={`${part} w-[168px] justify-center`}>English (USA)</div>
      <div className={`${part} w-[45px]`} />
      <div className={`${part} w-[31px] justify-center`}>
        <svg viewBox="0 0 20 12" className="h-3 w-5" fill="none" aria-hidden="true">
          <path d="M.5 3h11v6H.5z" stroke={blue} />
          <path d="M15 1.500h4M15 10.500h4M17 1.500v9" stroke={dark} />
        </svg>
      </div>
      <div className={`${part} w-5`} />
      <div className={`${part} w-5`} />
      <div className={`${part} w-[182px] justify-center`}>Average: ; Sum: 0</div>
      <div className={`${part} w-24 justify-center gap-[3px]`}>
        <button aria-label="Zoom out" className="h-[2px] w-[7px] bg-[#222]" />
        <input
          type="range"
          aria-label="Zoom"
          defaultValue={50}
          className="h-2 w-[66px] appearance-none bg-transparent [&::-webkit-slider-runnable-track]:h-px [&::-webkit-slider-runnable-track]:bg-[#8a8988] [&::-webkit-slider-thumb]:-mt-[3px] [&::-webkit-slider-thumb]:h-[7px] [&::-webkit-slider-thumb]:w-[3px] [&::-webkit-slider-thumb]:appearance-none [&::-webkit-slider-thumb]:border [&::-webkit-slider-thumb]:border-[#444] [&::-webkit-slider-thumb]:bg-white"
        />
        <button aria-label="Zoom in" className="flex w-[7px] justify-center">
          <svg viewBox="0 0 8 8" className="h-[7px] w-[7px]" aria-hidden="true">
            <path d="M0 4h8M4 0v8" stroke="#222" strokeWidth="1.600" />
          </svg>
        </button>
      </div>
      <div className="w-8 text-center">100%</div>
    </footer>
  );
}

export default function App() {
  return (
    <div className="flex h-screen flex-col overflow-hidden bg-[#f5f5f4] font-[Noto_Sans,sans-serif] text-[#333]">
      <header className="shrink-0">
        <div className="mr-4 flex h-[17px] items-center gap-px border-b border-[#e2e1df] text-[9px]">
          {menus.map((m) => (
            <button key={m} className="px-[5px]">
              {m}
            </button>
          ))}
          <button aria-label="Close document" className="-mr-3 ml-auto p-1">
            <svg viewBox="0 0 8 8" className="h-[6px] w-[6px]" aria-hidden="true">
              <path d="M1 1l6 6M7 1L1 7" stroke="#222" strokeWidth="2" />
            </svg>
          </button>
        </div>
        <div className="flex h-[27px] items-center pl-[3px]">
          {standardBar.map((item, i) => (
            <ToolItem key={i} item={item} />
          ))}
        </div>
        <div className="flex h-[27px] items-center pl-[2px]">
          <Combo label="Font Name" value="Calibri" className="w-[138px]" inputClass="italic" />
          <Combo label="Font Size" value="16 pt" className="mx-[5px] w-[68px]" />
          {formattingBar.map((item, i) => (
            <ToolItem key={i} item={item} />
          ))}
        </div>
      </header>

      <div className="flex min-h-0 flex-1">
        <main className="flex min-w-0 flex-1 flex-col border-r border-[#d0cfcd]">
          <FormulaBar />
          <div className="flex min-h-0 flex-1">
            <div className="min-w-0 flex-1 overflow-hidden bg-white">
              <Sheet />
            </div>
            <div className="w-[9px] bg-[#cdcdcd] px-[2px] pt-[1px]">
              <div className="h-[2px] bg-[#333]" />
              <div className="mt-[2px] h-[47%] rounded-full bg-[#7b7b7b]" />
            </div>
          </div>
          <div className="mr-[9px] flex h-[10px] shrink-0 items-center justify-between bg-[#cdcdcd] px-[2px]">
            <div className="h-[6px] w-[47%] rounded-full bg-[#7b7b7b]" />
            <div className="h-[7px] w-[2px] bg-[#333]" />
          </div>
          <SheetTabs />
        </main>
        <div className="flex w-1 items-center">
          <div className="h-[50px] w-full bg-[#9a9998]" />
        </div>
        <aside className="flex w-[34px] flex-col items-center pr-[2px]">
          {["hamburger", "properties", "styles", "gallery", "navigator", "fx"].map((n) => (
            <button key={n} aria-label={n} className="flex h-[29px] w-full items-center justify-center">
              <Icon name={n} className={n === "hamburger" ? "h-[13px] w-[13px]" : "h-4 w-4"} />
            </button>
          ))}
        </aside>
      </div>

      <StatusBar />
    </div>
  );
}
